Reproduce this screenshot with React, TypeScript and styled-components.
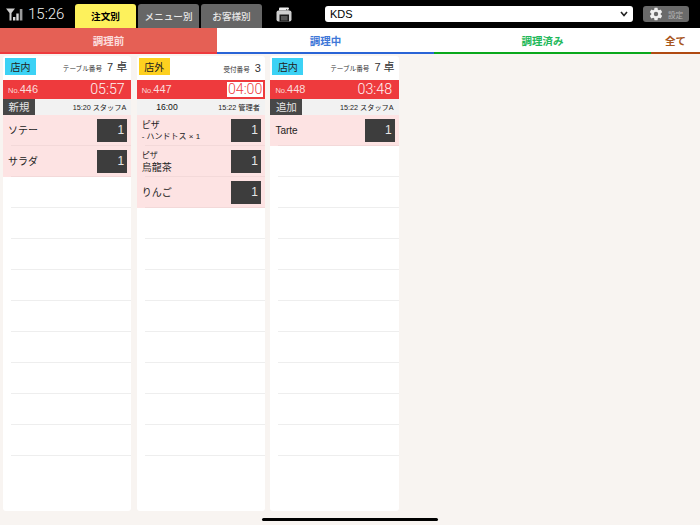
import React from "react";
import styled, { createGlobalStyle } from "styled-components";
import { IoSettingsSharp } from "react-icons/io5";

const Global = createGlobalStyle`
  html, body { margin: 0; padding: 0; background: #f8f4f1; }
  * { box-sizing: border-box; }
  body { font-family: "Liberation Sans", "Noto Sans CJK JP", sans-serif; }
`;

const Page = styled.div`
  position: relative;
  width: 700px;
  height: 525px;
  overflow: hidden;
  background: #f8f4f1;
  display: flex;
  flex-direction: column;
`;

const TopBar = styled.header`
  height: 28px;
  background: #000;
  display: flex;
  align-items: flex-end;
  padding-left: 6px;
  flex: none;
`;

const Clock = styled.div`
  display: flex;
  align-items: center;
  gap: 5px;
  width: 69px;
  height: 28px;
  color: #f2f2f2;
  font-family: "Roboto", sans-serif;
  font-weight: 300;
  font-size: 15px;
`;

const ViewTabs = styled.div`
  display: flex;
  gap: 2px;
`;

const ViewTab = styled.div<{ $active?: boolean }>`
  width: 61px;
  height: 24px;
  border-radius: 3px 3px 0 0;
  background: ${(p) => (p.$active ? "#fdf15c" : "#666")};
  color: ${(p) => (p.$active ? "#000" : "#e6e6e6")};
  font-size: 9.6px;
  font-weight: ${(p) => (p.$active ? 700 : 500)};
  display: flex;
  align-items: center;
  justify-content: center;
`;

const PrinterBox = styled.div`
  width: 63px;
  height: 28px;
  padding: 0 0 0 14px;
  display: flex;
  align-items: center;
`;

const KdsSelect = styled.div`
  width: 308px;
  height: 16px;
  margin-bottom: 6px;
  background: #fff;
  border-radius: 3px;
  color: #000;
  font-size: 11px;
  padding: 0 5px;
  display: flex;
  align-items: center;
  justify-content: space-between;
`;

const SettingsButton = styled.div`
  width: 46px;
  height: 16px;
  margin: 0 0 6px 10px;
  background: #6a6a6a;
  border-radius: 3px;
  color: #b4b4b4;
  font-size: 7.6px;
  display: flex;
  align-items: center;
  justify-content: center;
  gap: 5px;
`;

const StatusTabs = styled.nav`
  height: 25.5px;
  display: flex;
  flex: none;
  background: #fff;
`;

const StatusTab = styled.div<{ $w: number; $line: string; $color: string; $bg?: string }>`
  width: ${(p) => p.$w}px;
  height: 25.5px;
  background: ${(p) => p.$bg ?? "#fff"};
  border-bottom: 2.5px solid ${(p) => p.$line};
  color: ${(p) => p.$color};
  font-size: 10.5px;
  font-weight: 700;
  display: flex;
  align-items: center;
  justify-content: center;
  padding-top: 1px;
`;

const Board = styled.main`
  display: flex;
  gap: 5.5px;
  padding: 2.5px 0 0 3px;
  height: 457.5px;
`;

const Card = styled.section`
  width: 128.2px;
  background: #fff;
  border-radius: 3px;
  overflow: hidden;
  display: flex;
  flex-direction: column;
`;

const CardHead = styled.div`
  height: 24px;
  display: flex;
  align-items: flex-end;
  justify-content: space-between;
  padding: 0 4px 0 2px;
  flex: none;
`;

const Badge = styled.div<{ $bg: string }>`
  width: 31px;
  height: 17px;
  background: ${(p) => p.$bg};
  color: #222;
  font-size: 10px;
  display: flex;
  align-items: center;
  justify-content: center;
  margin-bottom: 5px;
`;

const SeatInfo = styled.div`
  display: flex;
  align-items: baseline;
  gap: 5px;
  color: #333;
  font-size: 6.6px;
  margin-bottom: 6px;
`;

const SeatValue = styled.span`
  font-size: 11px;
`;

const RedBar = styled.div`
  height: 18.5px;
  background: #ee3a3d;
  color: #fff;
  display: flex;
  align-items: center;
  justify-content: space-between;
  padding-left: 5px;
  flex: none;
`;

const OrderNo = styled.div`
  font-size: 11px;
  color: #fbdcdc;
  small { font-size: 7.5px; }
`;

const Timer = styled.div<{ $boxed?: boolean }>`
  height: ${(p) => (p.$boxed ? "15px" : "18px")};
  margin-right: ${(p) => (p.$boxed ? "1.5px" : "6.5px")};
  padding: ${(p) => (p.$boxed ? "0 1px" : "0")};
  background: ${(p) => (p.$boxed ? "#fff" : "transparent")};
  color: ${(p) => (p.$boxed ? "#ee3a3d" : "#fff4f4")};
  font-family: "Roboto", sans-serif;
  font-weight: 300;
  font-size: 14.2px;
  line-height: ${(p) => (p.$boxed ? "15px" : "18px")};
`;

const SubBar = styled.div`
  height: 16.5px;
  background: #f2f2f2;
  display: flex;
  align-items: center;
  justify-content: space-between;
  color: #222;
  font-size: 7.2px;
  padding-right: 5px;
  flex: none;
`;

const KindTag = styled.div<{ $plain?: boolean }>`
  width: ${(p) => (p.$plain ? "41px" : "32px")};
  height: 16px;
  background: ${(p) => (p.$plain ? "transparent" : "#474747")};
  color: ${(p) => (p.$plain ? "#111" : "#e4e4e4")};
  font-size: ${(p) => (p.$plain ? "8.6px" : "10.5px")};
  display: flex;
  align-items: center;
  justify-content: ${(p) => (p.$plain ? "flex-end" : "center")};
`;

const Row = styled.div<{ $filled?: boolean }>`
  position: relative;
  height: 31px;
  flex: none;
  background: ${(p) => (p.$filled ? "#fde3e3" : "#fff")};
  display: flex;
  align-items: center;
  justify-content: space-between;
  padding: 0 4px 1px 5px;
  &::after {
    content: "";
    position: absolute;
    left: 8px;
    right: 0;
    bottom: 0;
    height: 1px;
    background: ${(p) => (p.$filled ? "#f3d9d9" : "#eeeeee")};
  }
`;

const ItemText = styled.div`
  color: #222;
  font-size: 10px;
  line-height: 12px;
  padding-top: 2px;
`;

const SmallLine = styled.div<{ $size?: number }>`
  font-size: ${(p) => p.$size ?? 8}px;
  line-height: 11.5px;
`;

const Qty = styled.div`
  width: 30px;
  height: 23px;
  background: #3d3d3d;
  color: #e6e6e6;
  font-size: 12px;
  display: flex;
  align-items: center;
  justify-content: flex-end;
  padding-right: 3px;
`;

const HomeBar = styled.div`
  position: absolute;
  left: 262px;
  bottom: 4.5px;
  width: 176px;
  height: 3px;
  border-radius: 2px;
  background: #000;
`;

const Signal = () => (
  <svg width="17" height="13" viewBox="0 0 17 13">
    <path d="M0 0.5 H9 L5.5 5 V12.5 H3.5 V5 Z" fill="#cfcfcf" />
    <rect x="7" y="9" width="2.4" height="3.5" fill="#d8d8d8" />
    <rect x="10.3" y="5.5" width="2.4" height="7" fill="#d8d8d8" />
    <rect x="13.8" y="1" width="2.6" height="11.5" fill="#9a9a9a" />
  </svg>
);

const Printer = () => (
  <svg width="16" height="15" viewBox="0 0 16 15">
    <path d="M3 1.5 Q3 0.5 4 0.5 H12 Q13 0.5 13 1.5 V3.5 H3 Z" fill="#efefef" />
    <rect x="0.5" y="3.5" width="15" height="11" rx="2" fill="#cfcfcf" />
    <rect x="10" y="2" width="1.2" height="1.2" fill="#666" />
    <rect x="12" y="2" width="1.2" height="1.2" fill="#666" />
    <rect x="3.5" y="7.5" width="9.5" height="7" fill="#1a1a1a" />
    <rect x="5" y="9" width="6.5" height="4.5" fill="#555" />
  </svg>
);

const Chevron = () => (
  <svg width="8" height="6" viewBox="0 0 8 6">
    <path d="M1 1 L4 4.5 L7 1" fill="none" stroke="#222" strokeWidth="1.6" />
  </svg>
);

type Item = { name: string; size?: number; sub?: string; over?: string };
type Order = {
  badge: string;
  badgeBg: string;
  seatLabel: string;
  seat: string;
  no: string;
  time: string;
  boxed?: boolean;
  kind: string;
  plain?: boolean;
  stamp: string;
  items: Item[];
};

const orders: Order[] = [
  {
    badge: "店内",
    badgeBg: "#3cd2f5",
    seatLabel: "テーブル番号",
    seat: "7 卓",
    no: "446",
    time: "05:57",
    kind: "新規",
    stamp: "15:20 スタッフA",
    items: [{ name: "ソテー" }, { name: "サラダ" }],
  },
  {
    badge: "店外",
    badgeBg: "#fdd020",
    seatLabel: "受付番号",
    seat: "3",
    no: "447",
    time: "04:00",
    boxed: true,
    kind: "16:00",
    plain: true,
    stamp: "15:22 管理者",
    items: [
      { name: "ピザ", sub: "- ハンドトス × 1" },
      { name: "烏龍茶", over: "ピザ" },
      { name: "りんご" },
    ],
  },
  {
    badge: "店内",
    badgeBg: "#3cd2f5",
    seatLabel: "テーブル番号",
    seat: "7 卓",
    no: "448",
    time: "03:48",
    kind: "追加",
    stamp: "15:22 スタッフA",
    items: [{ name: "Tarte" }],
  },
];

const ROWS = 11;

export default function App() {
  return (
    <Page>
      <Global />
      <TopBar>
        <Clock>
          <Signal />
          15:26
        </Clock>
        <ViewTabs>
          <ViewTab $active>注文別</ViewTab>
          <ViewTab>メニュー別</ViewTab>
          <ViewTab>お客様別</ViewTab>
        </ViewTabs>
        <PrinterBox>
          <Printer />
        </PrinterBox>
        <KdsSelect>
          KDS
          <Chevron />
        </KdsSelect>
        <SettingsButton>
          <IoSettingsSharp size={14} color="#f0f0f0" />
          設定
        </SettingsButton>
      </TopBar>
      <StatusTabs>
        <StatusTab $w={217} $line="#ee3a3d" $color="#fbdcdc" $bg="#e56055">調理前</StatusTab>
        <StatusTab $w={217} $line="#2a64d6" $color="#3f78d8">調理中</StatusTab>
        <StatusTab $w={217} $line="#0aa81c" $color="#1fb85a">調理済み</StatusTab>
        <StatusTab $w={49} $line="#b04a12" $color="#a8561c">全て</StatusTab>
      </StatusTabs>
      <Board>
        {orders.map((o) => (
          <Card key={o.no}>
            <CardHead>
              <Badge $bg={o.badgeBg}>{o.badge}</Badge>
              <SeatInfo>
                {o.seatLabel}
                <SeatValue>{o.seat}</SeatValue>
              </SeatInfo>
            </CardHead>
            <RedBar>
              <OrderNo>
                <small>No.</small>
                {o.no}
              </OrderNo>
              <Timer $boxed={o.boxed}>{o.time}</Timer>
            </RedBar>
            <SubBar>
              <KindTag $plain={o.plain}>{o.kind}</KindTag>
              {o.stamp}
            </SubBar>
            {Array.from({ length: ROWS }).map((_, i) => {
              const item = o.items[i];
              return (
                <Row key={i} $filled={!!item}>
                  {item && (
                    <>
                      <ItemText>
                        {item.over && <SmallLine>{item.over}</SmallLine>}
                        {item.sub ? <SmallLine $size={9}>{item.name}</SmallLine> : item.name}
                        {item.sub && <SmallLine>{item.sub}</SmallLine>}
                      </ItemText>
                      <Qty>1</Qty>
                    </>
                  )}
                </Row>
              );
            })}
          </Card>
        ))}
      </Board>
      <HomeBar />
    </Page>
  );
}
